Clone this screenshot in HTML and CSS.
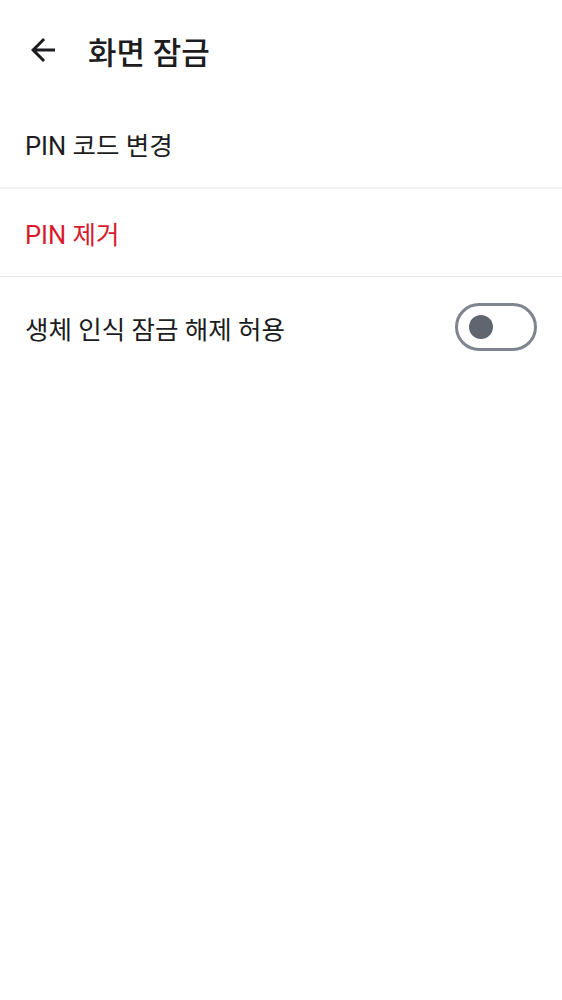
FILE: index.html
```html
<!DOCTYPE html>
<html lang="ko">
<head>
<meta charset="utf-8">
<title>화면 잠금</title>
<link rel="stylesheet" href="styles.css">
</head>
<body>
<div class="screen">
  <header class="appbar">
    <button class="back" aria-label="뒤로">
      <svg viewBox="0 0 24 24" width="36" height="36"><path d="M20 11H7.83l5.59-5.59L12 4l-8 8 8 8 1.41-1.41L7.83 13H20v-2z" fill="currentColor"/></svg>
    </button>
    <h1 class="title">화면 잠금</h1>
  </header>
  <ul class="list">
    <li class="row row-thick">PIN 코드 변경</li>
    <li class="row row-danger">PIN 제거</li>
    <li class="row row-last">
      <span>생체 인식 잠금 해제 허용</span>
      <span class="toggle"><span class="knob"></span></span>
    </li>
  </ul>
</div>
</body>
</html>
```
FILE: styles.css
```css
html, body {
  margin: 0;
  padding: 0;
  background: #ffffff;
}
body {
  font-family: Roboto, "Noto Sans CJK KR", sans-serif;
  color: #1c1c21;
}
.screen {
  width: 562px;
}
.appbar {
  height: 100px;
  display: flex;
  align-items: center;
  padding-left: 25px;
  gap: 27px;
}
.back {
  width: 36px;
  height: 36px;
  padding: 0;
  border: 0;
  background: none;
  color: #1c1c21;
  display: flex;
}
.title {
  margin: 0;
  font-size: 31px;
  font-weight: 500;
  font-family: Roboto, "Noto Sans CJK KR", sans-serif;
  color: #1c1c21;
}
.list {
  list-style: none;
  margin: 0;
  padding: 0;
}
.row {
  height: 87px;
  display: flex;
  align-items: center;
  justify-content: space-between;
  padding: 0 25px;
  font-size: 25.5px;
  border-bottom: 1px solid #e6e6ee;
}
.row-thick {
  border-bottom: 2px solid #f1f1f6;
}
.row-danger {
  color: #d71a2c;
}
.row-last {
  border-bottom: 0;
  height: 100px;
}
.toggle {
  box-sizing: border-box;
  width: 82px;
  height: 48px;
  border: 3px solid #7e858f;
  border-radius: 24px;
  display: flex;
  align-items: center;
  padding-left: 11px;
}
.knob {
  width: 24px;
  height: 24px;
  border-radius: 50%;
  background: #5f6670;
}
```
